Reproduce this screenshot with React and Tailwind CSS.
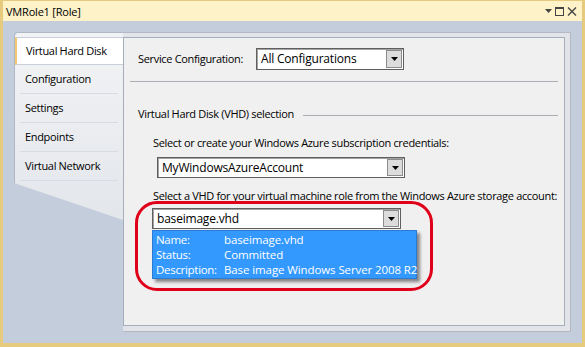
import React from "react";

const font = { fontFamily: '"Open Sans", "Noto Sans", sans-serif' };

const Combo = ({ value, className }) => (
  <div
    className={`flex h-[21px] items-stretch border border-[#5f5f5f] bg-white shadow-[inset_1px_1px_0_#a3a3a3] ${className}`}
  >
    <div className="flex flex-1 items-center whitespace-nowrap pl-[4px] text-[12px] leading-none tracking-[-0.2px] text-black">
      {value}
    </div>
    <div className="m-[1px] flex w-[16px] items-center justify-center border border-[#8c8c8c] bg-[#dcdcdc]">
      <svg width="7" height="4" viewBox="0 0 7 4">
        <path d="M0 0h7L3.5 4z" fill="#000" />
      </svg>
    </div>
  </div>
);

const tabs = ["Configuration", "Settings", "Endpoints", "Virtual Network"];

const rows = [
  ["Name:", "baseimage.vhd"],
  ["Status:", "Committed"],
  ["Description:", "Base image Windows Server 2008 R2"],
];

export default function App() {
  return (
    <div
      className="flex h-[347px] w-[585px] flex-col border-x-[3px] border-b-[4px] border-t border-[#e6ca7e] bg-[#fdf2c8] text-[11px] tracking-[-0.33px] text-black"
      style={font}
    >
      <div className="flex h-[20px] items-center justify-between pl-[3px] pr-[5px]">
        <span className="text-[11px] leading-none tracking-[-0.2px]">VMRole1 [Role]</span>
        <div className="flex items-center gap-[3px]">
          <svg width="7" height="4" viewBox="0 0 7 4">
            <path d="M0 0h7L3.5 4z" fill="#444" />
          </svg>
          <svg width="9" height="9" viewBox="0 0 9 9">
            <rect x="0.5" y="0.5" width="8" height="8" fill="none" stroke="#444" />
            <rect x="0" y="0" width="9" height="2" fill="#444" />
          </svg>
          <svg width="10" height="9" viewBox="0 0 10 9">
            <path d="M1 0.5l8 8M9 0.5l-8 8" stroke="#444" strokeWidth="1.4" />
          </svg>
        </div>
      </div>

      <div className="flex flex-1 bg-[#c4cddb] p-[11px]">
        {/* tab strip */}
        <div className="w-[109px] self-start">
          <div className="h-[190px] rounded-tl-[4px] border-l border-t border-[#b0b8c6] bg-gradient-to-b from-[#f2f3f5] to-[#e3e6eb] pt-[4px] [clip-path:polygon(0_0,109px_0,109px_188px,0_151px)]">
            <div className="relative z-10 flex h-[28px] items-center border-y border-l-2 border-[#c9cfd8] border-l-[#f0c870] bg-white pl-[9px]">
              Virtual Hard Disk
            </div>
            {tabs.map((t) => (
              <div
                key={t}
                className="mx-[5px] flex h-[29px] items-center border-b border-[#d8dce2] pl-[5px]"
              >
                {t}
              </div>
            ))}
          </div>
        </div>

        {/* page */}
        <div className="flex flex-1 border-r border-t border-b border-[#b2b9c5] bg-[#e2e4ea] pb-[5px] pr-[5px] pt-[4px]">
          <div className="relative flex flex-1 flex-col whitespace-nowrap border border-[#a7aebb] bg-[#f0f0f0]">
            <div className="mt-[10px] flex h-[22px] items-center">
              <span className="ml-[14px] w-[118px]">Service Configuration:</span>
              <Combo value="All Configurations" className="h-[22px] w-[148px]" />
            </div>
            <div className="ml-[6px] mt-[11px] h-px w-[428px] bg-[#a9adb4]" />

            <div className="mt-[25px] flex items-center pr-[6px]">
              <span className="ml-[14px] leading-[14px]">Virtual Hard Disk (VHD) selection</span>
              <div className="ml-[9px] mt-[3px] h-px flex-1 bg-[#a9adb4]" />
            </div>

            <div className="ml-[29px] mt-[15px] leading-[14px]">
              Select or create your Windows Azure subscription credentials:
            </div>
            <Combo value="MyWindowsAzureAccount" className="ml-[33px] mt-[7px] w-[248px]" />

            <div className="ml-[29px] mt-[11px] leading-[14px]">
              Select a VHD for your virtual machine role from the Windows Azure storage account:
            </div>
            <div className="relative ml-[28px] mt-[5px] w-[249px]">
              <Combo value="baseimage.vhd" className="w-[249px]" />
              <div className="absolute left-0 top-[22px] z-10 w-[265px] border border-[#2b7bd6] bg-[#3399ff] py-[1px] pl-[3px] text-[11.5px] leading-[15px] tracking-[-0.1px] text-white shadow-[3px_3px_3px_rgba(0,0,0,0.45)]">
                {rows.map(([k, v]) => (
                  <div key={k} className="flex">
                    <span className="w-[68px] shrink-0 tracking-[-0.3px]">{k}</span>
                    <span>{v}</span>
                  </div>
                ))}
              </div>
            </div>

            <div className="pointer-events-none absolute left-[11px] top-[163px] h-[90px] w-[298px] rounded-[22px] border-[3px] border-[#e0001a]" />
          </div>
        </div>
      </div>
    </div>
  );
}
